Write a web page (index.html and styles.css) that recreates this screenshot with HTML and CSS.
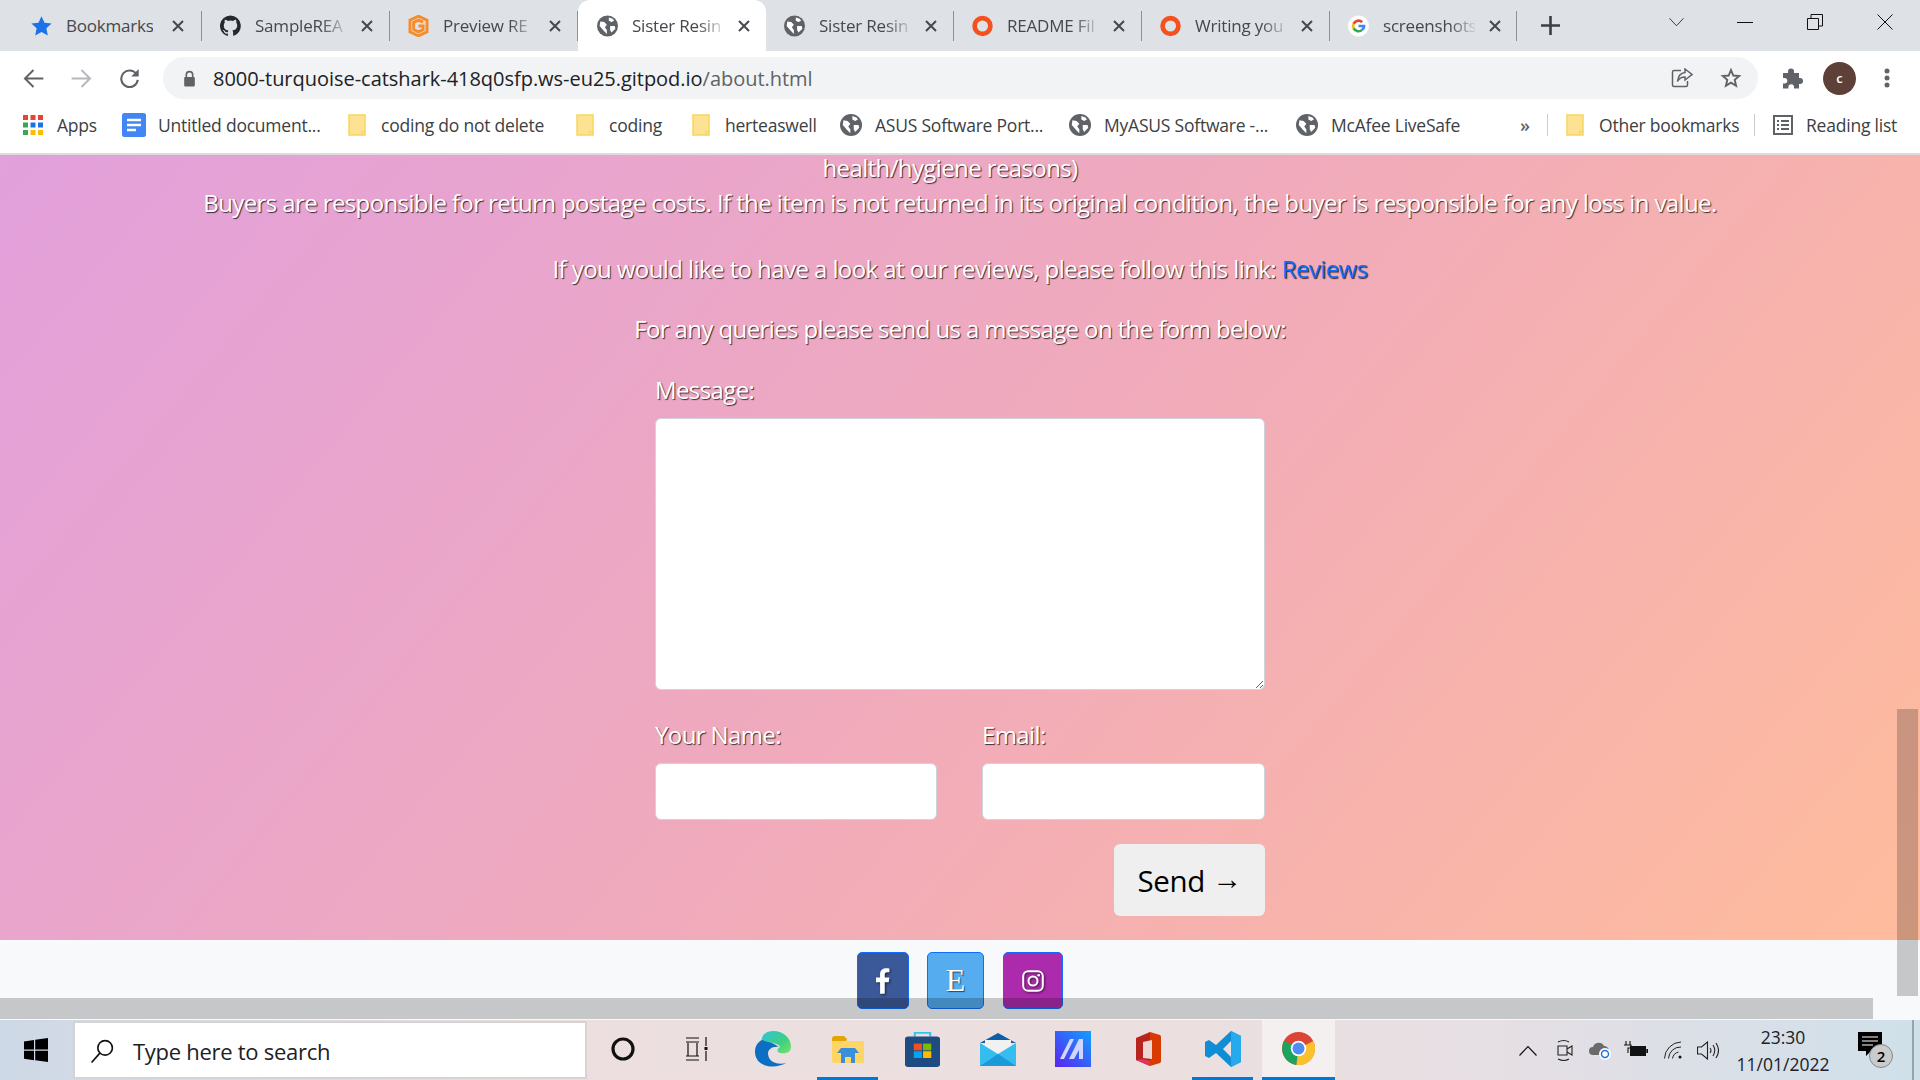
FILE: index.html
```html
<!DOCTYPE html>
<html lang="en">
<head>
<meta charset="utf-8">
<title>Sister Resin</title>
<link rel="stylesheet" href="styles.css">
</head>
<body>
<svg class="defs" width="0" height="0">
  <symbol id="globe" viewBox="0 0 16 16"><circle cx="8" cy="8" r="8" fill="#5f6368"/><path d="M2.500 4.500l3 .5 2 2-1.500 2 1.500 2v3L5 11.500 2 8zM9 1.500l3 1 1 1.500-2 1-2-1zM10 8h3.500l.5 2-3 3-1-2z" fill="#fff"/></symbol>
  <symbol id="folder" viewBox="0 0 18 22"><path d="M1 1h16v20H1z" fill="#fde293" stroke="#f9d65c" stroke-width="1.500"/><path d="M13.500 21v-3.500h3V21" fill="none" stroke="#f9d65c" stroke-width="1.200"/></symbol>
  <symbol id="ring" viewBox="0 0 16 16"><circle cx="8" cy="8" r="6" fill="none" stroke="#f4511e" stroke-width="3.600"/></symbol>
  <symbol id="tabx" viewBox="0 0 12 12"><path d="M1 1l10 10M11 1L1 11" stroke="#45484d" stroke-width="2"/></symbol>
</svg>

<header class="tabbar">
  <div class="tab"><svg class="fav" viewBox="0 0 16 16"><path d="M8 .5l2.300 5 5.400.6-4 3.700 1.100 5.400L8 12.500l-4.800 2.700 1.100-5.400-4-3.700 5.400-.6z" fill="#1a73e8"/></svg><span class="tab-title">Bookmarks</span><svg class="x"><use href="#tabx"/></svg></div>
  <div class="tab"><svg class="fav" viewBox="0 0 16 16"><path d="M8 0a8 8 0 0 0-2.500 15.600c.4.100.5-.2.500-.4v-1.400c-2.200.5-2.700-1-2.700-1-.4-.9-.9-1.200-.9-1.200-.7-.5.100-.5.100-.5.800.1 1.200.8 1.200.8.700 1.200 1.900.9 2.300.7.100-.5.300-.9.500-1.100-1.800-.2-3.600-.9-3.600-4 0-.9.300-1.600.8-2.100-.1-.2-.4-1 .1-2.100 0 0 .7-.2 2.200.8a7.600 7.600 0 0 1 4 0c1.500-1 2.200-.8 2.200-.8.400 1.100.2 1.900.1 2.100.5.600.8 1.300.8 2.100 0 3.100-1.900 3.700-3.700 3.900.3.300.6.800.6 1.500v2.200c0 .2.100.5.600.4A8 8 0 0 0 8 0z" fill="#24292e"/></svg><span class="tab-title">SampleREA</span><svg class="x"><use href="#tabx"/></svg></div>
  <div class="tab"><svg class="fav" viewBox="0 0 16 16"><path d="M8 .5l6.500 3v9L8 15.500l-6.500-3v-9zM11.500 5L8 3.500 4.300 5.200v5.600L8 12.500l3.500-1.700V8H8" fill="none" stroke="#f78c2a" stroke-width="2.200"/></svg><span class="tab-title">Preview RE</span><svg class="x"><use href="#tabx"/></svg></div>
  <div class="tab active"><svg class="fav"><use href="#globe"/></svg><span class="tab-title">Sister Resin</span><svg class="x"><use href="#tabx"/></svg></div>
  <div class="tab"><svg class="fav"><use href="#globe"/></svg><span class="tab-title">Sister Resin</span><svg class="x"><use href="#tabx"/></svg></div>
  <div class="tab"><svg class="fav"><use href="#ring"/></svg><span class="tab-title">README Fil</span><svg class="x"><use href="#tabx"/></svg></div>
  <div class="tab"><svg class="fav"><use href="#ring"/></svg><span class="tab-title">Writing you</span><svg class="x"><use href="#tabx"/></svg></div>
  <div class="tab"><svg class="fav" viewBox="0 0 16 16"><circle cx="8" cy="8" r="8" fill="#fff"/><path d="M8 5a3 3 0 0 1 2 .8l1.500-1.500A5.200 5.200 0 0 0 3.400 5.700L5.100 7A3 3 0 0 1 8 5z" fill="#ea4335"/><path d="M5.100 9L3.400 10.300a5.200 5.200 0 0 0 8 1.400L9.800 10.400A3 3 0 0 1 5.100 9z" fill="#34a853"/><path d="M5 8c0-.4.100-.7.100-1L3.400 5.700a5.200 5.200 0 0 0 0 4.600L5.100 9A3 3 0 0 1 5 8z" fill="#fbbc05"/><path d="M13.200 7H8v2h3a2.600 2.600 0 0 1-1.200 1.400l1.600 1.300A5.200 5.200 0 0 0 13.200 7z" fill="#4285f4"/></svg><span class="tab-title">screenshots</span><svg class="x"><use href="#tabx"/></svg></div>
  <svg class="plus" viewBox="0 0 19 19"><path d="M9.500 0v19M0 9.500h19" stroke="#3c4043" stroke-width="2.600"/></svg>
  <div class="win-controls">
    <svg class="win chev" viewBox="0 0 16 10"><path d="M.5 1l7.500 8 7.500-8" fill="none" stroke="#333" stroke-width="1"/></svg>
    <svg class="win minw" viewBox="0 0 16 16"><path d="M0 8.500h16" stroke="#111" stroke-width="1"/></svg>
    <svg class="win maxw" viewBox="0 0 16 16"><path d="M.5 4.500h11v11H.5zM4 4.500V.5h11.500V12h-4" fill="none" stroke="#111" stroke-width="1"/></svg>
    <svg class="win closew" viewBox="0 0 16 16"><path d="M.5.500l15 15M15.500.500l-15 15" stroke="#111" stroke-width="1"/></svg>
  </div>
</header>

<div class="toolbar">
  <svg class="nav" viewBox="0 0 16 16"><path d="M15.500 8H1.500M8 1.500L1.500 8 8 14.500" fill="none" stroke="#5f6368" stroke-width="1.500"/></svg>
  <svg class="nav" viewBox="0 0 16 16"><path d="M.5 8h14M8 1.500L14.500 8 8 14.500" fill="none" stroke="#b5b8bc" stroke-width="1.500"/></svg>
  <svg class="nav" viewBox="0 0 16 16"><path d="M13.500 5A6.300 6.300 0 1 0 14.300 9" fill="none" stroke="#5f6368" stroke-width="1.600"/><path d="M15 .800v5.700H9.300z" fill="#5f6368"/></svg>
  <div class="omnibox">
    <svg class="lock" viewBox="0 0 12 16"><path d="M3 7V4.500a3 3 0 0 1 6 0V7" fill="none" stroke="#5f6368" stroke-width="1.500"/><rect x="1" y="6.500" width="10" height="9" rx="1" fill="#5f6368"/></svg>
    <span class="url">8000-turquoise-catshark-418q0sfp.ws-eu25.gitpod.io<span class="url-path">/about.html</span></span>
    <svg class="omni-ic" viewBox="0 0 22 20"><path d="M10 2.500H3a1.500 1.500 0 0 0-1.500 1.500v13A1.500 1.500 0 0 0 3 18.500h12a1.500 1.500 0 0 0 1.500-1.500v-4" fill="none" stroke="#5f6368" stroke-width="1.500"/><path d="M14 1l7 5.500-7 5.500V9c-4 0-6 1.500-7.500 4.500C7 8.500 9.500 5 14 4.500z" fill="#f1f3f4" stroke="#5f6368" stroke-width="1.500"/></svg>
    <svg class="omni-ic star" viewBox="0 0 20 20"><path d="M10 2l2.300 5.500 5.900.5-4.500 3.900 1.400 5.800L10 14.600l-5.100 3.100 1.400-5.800L1.800 8l5.900-.5z" fill="none" stroke="#5f6368" stroke-width="1.900"/></svg>
  </div>
  <svg class="ext" viewBox="0 0 22 22"><path d="M2 6h5V4.500a3 3 0 0 1 6 0V6h5v5h1a3 3 0 0 1 0 6h-1v4.500h-5V20a2.800 2.800 0 0 0-5.600 0v1.500H2v-5h1.500a2.800 2.800 0 0 0 0-5.600H2z" fill="#5f6368"/></svg>
  <span class="avatar">c</span>
  <svg class="kebab" viewBox="0 0 6 20"><circle cx="3" cy="3" r="2.500" fill="#5f6368"/><circle cx="3" cy="10" r="2.500" fill="#5f6368"/><circle cx="3" cy="17" r="2.500" fill="#5f6368"/></svg>
</div>

<nav class="bookmarks">
  <div class="bm w-apps"><svg class="apps" viewBox="0 0 20 20"><g fill="#ea4335"><rect width="5" height="5"/><rect x="7.500" width="5" height="5"/><rect x="15" width="5" height="5"/></g><rect y="7.500" width="5" height="5" fill="#34a853"/><rect x="7.500" y="7.500" width="5" height="5" fill="#1a73e8"/><rect x="15" y="7.500" width="5" height="5" fill="#1a73e8"/><rect y="15" width="5" height="5" fill="#34a853"/><rect x="7.500" y="15" width="5" height="5" fill="#fbbc05"/><rect x="15" y="15" width="5" height="5" fill="#fbbc05"/></svg><span>Apps</span></div>
  <div class="bm w-doc"><svg class="doc" viewBox="0 0 24 24"><rect width="24" height="24" rx="2.500" fill="#4285f4"/><path d="M5 7h14M5 12h14M5 17h9" stroke="#fff" stroke-width="2.400"/></svg><span>Untitled document...</span></div>
  <div class="bm w-a"><svg class="folder"><use href="#folder"/></svg><span>coding do not delete</span></div>
  <div class="bm w-b"><svg class="folder"><use href="#folder"/></svg><span>coding</span></div>
  <div class="bm w-c"><svg class="folder"><use href="#folder"/></svg><span>herteaswell</span></div>
  <div class="bm w-d"><svg class="bm-globe"><use href="#globe"/></svg><span>ASUS Software Port...</span></div>
  <div class="bm w-e"><svg class="bm-globe"><use href="#globe"/></svg><span>MyASUS Software -...</span></div>
  <div class="bm w-f"><svg class="bm-globe"><use href="#globe"/></svg><span>McAfee LiveSafe</span></div>
  <span class="more">»</span>
  <i class="sep"></i>
  <div class="bm w-g"><svg class="folder"><use href="#folder"/></svg><span>Other bookmarks</span></div>
  <i class="sep"></i>
  <div class="bm"><svg class="reading" viewBox="0 0 20 20"><rect x="1" y="1" width="18" height="18" fill="none" stroke="#5f6368" stroke-width="2"/><path d="M4 6h2M8 6h8M4 10h2M8 10h8M4 14h2M8 14h8" stroke="#5f6368" stroke-width="1.800"/></svg><span>Reading list</span></div>
</nav>

<div class="viewport">
  <main class="gradient">
    <p class="line l1">health/hygiene reasons)</p>
    <p class="line l2">Buyers are responsible for return postage costs. If the item is not returned in its original condition, the buyer is responsible for any loss in value.</p>
    <p class="line l3">If you would like to have a look at our reviews, please follow this link: <a href="#reviews">Reviews</a></p>
    <p class="line l4">For any queries please send us a message on the form below:</p>
    <form class="form">
      <label class="lbl">Message:</label>
      <textarea class="area"></textarea>
      <div class="two">
        <div class="fld"><label class="lbl">Your Name:</label><input class="inp" type="text"></div>
        <div class="fld"><label class="lbl">Email:</label><input class="inp" type="text"></div>
      </div>
      <div class="send-row"><button class="send" type="button">Send <span class="arrow">→</span></button></div>
    </form>
  </main>
  <footer class="foot">
    <span class="social fb"><svg viewBox="0 0 12 22" class="s-ic"><path d="M7.500 22V12h3.400l.6-4H7.500V5.500c0-1.200.5-2 2-2h2V.2C11 .1 10 0 8.800 0 6 0 3.500 1.700 3.500 5v3H0v4h3.500v10z" fill="#fff"/></svg></span>
    <span class="social et">E</span>
    <span class="social ig"><svg viewBox="0 0 22 22" class="s-ic2"><rect x="1.200" y="1.200" width="19.600" height="19.600" rx="5" fill="none" stroke="#fff" stroke-width="2"/><circle cx="11" cy="11" r="4.500" fill="none" stroke="#fff" stroke-width="2"/><circle cx="16.700" cy="5.300" r="1.300" fill="#fff"/></svg></span>
  </footer>
  <div class="hscroll"></div>
  <div class="vthumb"></div>
</div>

<div class="taskbar">
  <svg class="start" viewBox="0 0 24 24"><path d="M0 3.400l10-1.400v9.500H0zM11.200 1.800L24 0v11.500H11.200zM0 12.700h10v9.500L0 20.800zM11.200 12.700H24V24l-12.800-1.800z" fill="#000"/></svg>
  <div class="search"><svg class="mag" viewBox="0 0 24 24"><circle cx="14.500" cy="9" r="7" fill="none" stroke="#111" stroke-width="1.600"/><path d="M9.500 14L1.500 23" stroke="#111" stroke-width="1.600"/></svg><span>Type here to search</span></div>
  <div class="ts-icons">
    <span class="ts"><svg viewBox="0 0 24 24" class="i24"><circle cx="12" cy="12" r="10" fill="none" stroke="#111" stroke-width="3.200"/></svg></span>
    <span class="ts"><svg viewBox="0 0 24 24" class="i24"><path d="M0 1h13M0 5h13M2 6v13M11 6v13M0 19h13M0 23h13M20 0v9M20 14v10" stroke="#111" stroke-width="1.200" fill="none"/><rect x="18.500" y="10" width="3" height="3" fill="#111"/></svg></span>
    <span class="ts"><svg viewBox="0 0 30 36" class="i36" preserveAspectRatio="none"><defs><linearGradient id="eg" x1="0" y1="0" x2="1" y2="1"><stop offset="0" stop-color="#2fc3e0"/><stop offset=".6" stop-color="#3fd07f"/><stop offset="1" stop-color="#7be26a"/></linearGradient></defs><path d="M15 0c9 0 15 7 15 16 0 6-5 7-9 6-4-1-2-5 0-6-2-5-11-5-14 0C3 8 7 0 15 0z" fill="url(#eg)"/><path d="M6 9C-2 13-2 28 6 33c6 4 14 3 20-1-6 2-14 0-15-8-1-5 3-9 9-8-4-4-10-5-14-7z" fill="#0c6fc4"/></svg></span>
    <span class="ts on"><svg viewBox="0 0 32 27" class="i-folder"><path d="M0 3q0-3 3-3h9l3 3-1 3H0z" fill="#e3a500"/><path d="M0 5h32v20q0 2-2 2H2q-2 0-2-2z" fill="#ffd666"/><path d="M9 12h14l4 5h-4v10h-4v-6h-6v6H9V17H5z" fill="#3a8fd8"/></svg></span>
    <span class="ts"><svg viewBox="0 0 32 40" class="i-store" preserveAspectRatio="none"><path d="M9 6V2h14v4" fill="none" stroke="#35c4ef" stroke-width="2"/><rect y="6" width="32" height="34" rx="3" fill="#1e4b80"/><rect x="8" y="14" width="7.500" height="7.500" fill="#f25022"/><rect x="16.500" y="14" width="7.500" height="7.500" fill="#7fba00"/><rect x="8" y="22.500" width="7.500" height="7.500" fill="#00a4ef"/><rect x="16.500" y="22.500" width="7.500" height="7.500" fill="#ffb900"/></svg></span>
    <span class="ts"><svg viewBox="0 0 36 33" class="i-mail"><path d="M18 0L36 10H0z" fill="#0a5fa8"/><path d="M5 7h26v8L18 21 5 15z" fill="#f1f1f1"/><path d="M0 10l18 11 18-11v23H0z" fill="#35bdf0"/><path d="M0 33l18-12 18 12z" fill="#1591d6" opacity=".8"/></svg></span>
    <span class="ts"><svg viewBox="0 0 36 36" class="i36"><defs><linearGradient id="mg" x1="0" y1="1" x2="1" y2="0"><stop offset="0" stop-color="#5b22f0"/><stop offset="1" stop-color="#12a0ff"/></linearGradient></defs><rect width="36" height="36" fill="url(#mg)"/><path d="M5 28L15 8h4L9 28zM14 28L24 8h4v20h-4v-9l-5 9z" fill="#cfd6ff"/></svg></span>
    <span class="ts"><svg viewBox="0 0 26 34" class="i-office"><path d="M15 0l10 3q1 .5 1 2v24q0 1.500-1 2l-10 3z" fill="#d83b01"/><path d="M15 0L1 6v22l14 6z" fill="#b7241d"/><path d="M1 28l14 6v-5L8 27z" fill="#e0355a"/><path d="M8 10l9-2v19l-9-1z" fill="#eed7d2"/></svg></span>
    <span class="ts on"><svg viewBox="0 0 36 36" class="i36"><path d="M26 0l10 5v26l-10 5-15-14-7 5-4-2v-14l4-2 7 5zM26 10l-8 8 8 8z" fill="#0f8ed6"/><path d="M26 0l10 5v26l-10 5z" fill="#27a9ee"/></svg></span>
    <span class="ts act"><svg viewBox="0 0 32 32" class="i-chrome"><circle cx="16" cy="16" r="16" fill="#db4437"/><path d="M16 16L2 8.500A16 16 0 0 0 14 31.900z" fill="#1ca45c"/><path d="M16 16l14.300-7.200A16 16 0 0 1 14 32z" fill="#fbc02d"/><circle cx="16" cy="16" r="7.500" fill="#fff"/><circle cx="16" cy="16" r="5.800" fill="#4e8df5"/></svg></span>
  </div>
  <div class="tray">
    <svg class="chevup" viewBox="0 0 18 11"><path d="M.5 10.500l8.500-9 8.500 9" fill="none" stroke="#111" stroke-width="1.200"/></svg>
    <svg class="meet" viewBox="0 0 16 23"><path d="M1 7h9v9H1zM10 10l5-3v9l-5-3M1 3q6-3 11 0M1 20q6 3 11 0" fill="none" stroke="#222" stroke-width="1.100"/></svg>
    <svg class="cloud" viewBox="0 0 24 20"><path d="M5 15a4 4 0 0 1 0-8 6 6 0 0 1 11-1 5 5 0 0 1 5 5v4z" fill="#6a6a6a"/><circle cx="17" cy="14" r="6" fill="#fff"/><circle cx="17" cy="14" r="3.500" fill="none" stroke="#1a73e8" stroke-width="1.500"/></svg>
    <svg class="batt" viewBox="0 0 24 16"><path d="M2 0v4M6 0v4M0 4h7v3H4v5" fill="none" stroke="#111" stroke-width="1.100"/><rect x="6" y="5" width="16" height="10" fill="#111"/><rect x="22.300" y="8" width="1.700" height="4" fill="#111"/></svg>
    <svg class="wifi" viewBox="0 0 19 18"><path d="M.5 17.500A17 17 0 0 1 17 1M4.500 17.500A12 12 0 0 1 17 6M8.500 17.500a8 8 0 0 1 6-6.500" fill="none" stroke="#222" stroke-width="1"/><circle cx="16" cy="16" r="1.500" fill="#111"/></svg>
    <svg class="vol" viewBox="0 0 22 19"><path d="M.5 6h4l6-5v17l-6-5h-4zM13 7q2 2.500 0 5M16 4q3.500 5.500 0 11M19 2q5 7.500 0 15" fill="none" stroke="#222" stroke-width="1.100"/></svg>
    <div class="clock"><span>23:30</span><span>11/01/2022</span></div>
    <div class="notif"><svg class="bubble" viewBox="0 0 24 26"><path d="M0 0h24v19H13l-5 5v-5H0z" fill="#000"/><path d="M4 5h16M4 9h16M4 13h11" stroke="#fff" stroke-width="1.200"/></svg><span class="badge">2</span></div>
    <i class="peek"></i>
  </div>
</div>
</body>
</html>
```
FILE: styles.css
```css
* { box-sizing: border-box; }
html, body { margin: 0; height: 100%; overflow: hidden; }
body {
  width: 1920px; height: 1080px; display: flex; flex-direction: column;
  font-family: "Open Sans", "Noto Sans", sans-serif; color: #3c4043; background: #fff;
}
.defs { position: absolute; }

.tabbar { height: 51px; flex: none; background: #dee1e6; display: flex; align-items: center; padding-left: 11px; }
.tab { width: 188px; height: 51px; display: flex; align-items: center; padding-left: 18px; position: relative; flex: none; }
.tab::after { content: ""; position: absolute; right: 0; top: 11px; height: 30px; width: 1px; background: #8e9196; }
.tab:first-child { width: 191px; padding-left: 20px; }
.tab:nth-child(8) { width: 187px; }
.tab.active { background: #fff; border-radius: 12px 12px 0 0; padding-left: 19px; }
.tab.active::after { display: none; }
.fav { width: 21px; height: 22px; flex: none; }
.tab-title {
  width: 92px; margin-left: 14px; overflow: hidden; white-space: nowrap; font-size: 17px; letter-spacing: -.2px; color: #45484d;
  -webkit-mask-image: linear-gradient(90deg, #000 72%, rgba(0,0,0,.1));
  mask-image: linear-gradient(90deg, #000 72%, rgba(0,0,0,.1));
}
.tab:first-child .tab-title { width: 87px; -webkit-mask-image: none; mask-image: none; }
.tab:first-child .x { margin-left: 19px; }
.x { width: 12px; height: 12px; margin-left: 14px; flex: none; }
.plus { width: 19px; height: 19px; margin-left: 24px; flex: none; }
.win-controls { margin-left: auto; display: flex; align-items: flex-start; height: 51px; align-self: flex-start; padding: 14px 27px 0 0; }
.win { flex: none; width: 16px; height: 16px; }
.chev { width: 15px; height: 10px; margin: 3px 53px 0 0; }
.minw { margin-right: 54px; }
.maxw { margin-right: 54px; }

.toolbar { height: 48px; flex: none; display: flex; align-items: center; padding: 6px 0 0 23px; background: #fff; }
.nav { width: 21px; height: 21px; flex: none; margin-right: 27px; }
.nav:nth-child(3) { margin-right: 23px; }
.omnibox { width: 1595px; height: 42px; flex: none; background: #f1f3f4; border-radius: 21px; display: flex; align-items: center; padding-left: 20px; }
.lock { width: 13px; height: 17px; flex: none; }
.url { margin-left: 17px; font-size: 20px; letter-spacing: -.03px; color: #202124; white-space: nowrap; }
.url-path { color: #5f6368; }
.omni-ic { width: 22px; height: 20px; flex: none; margin-left: auto; }
.star { margin-left: 27px; margin-right: 16px; }
.ext { width: 22px; height: 22px; margin-left: 23px; flex: none; }
.avatar { width: 33px; height: 33px; margin-left: 20px; border-radius: 50%; background: #5d4037; color: #fff; font-size: 13px; font-weight: 600; display: flex; align-items: center; justify-content: center; flex: none; }
.kebab { width: 6px; height: 20px; margin-left: 28px; flex: none; }

.bookmarks { height: 56px; flex: none; display: flex; align-items: center; padding: 0 0 2px 23px; background: #fff; border-bottom: 2px solid #dcdcdc; font-size: 17.500px; letter-spacing: -.22px; color: #3c4043; }
.bm { display: flex; align-items: center; white-space: nowrap; flex: none; }
.w-apps { width: 99px; }
.w-doc { width: 226px; }
.w-a { width: 228px; }
.w-b { width: 116px; }
.w-c { width: 148px; }
.w-d { width: 229px; }
.w-e { width: 227px; }
.w-f { width: 224px; }
.w-g { width: 188px; }
.apps { width: 20px; height: 20px; margin-right: 14px; flex: none; }
.doc { width: 24px; height: 24px; margin-right: 12px; flex: none; }
.folder { width: 18px; height: 22px; margin-right: 15px; flex: none; }
.bm-globe { width: 22px; height: 22px; margin-right: 13px; flex: none; }
.more { width: 27px; flex: none; font-size: 18px; font-weight: 600; color: #5f6368; }
.sep { width: 1px; height: 22px; background: #ccc; margin-right: 18px; flex: none; }
.reading { width: 20px; height: 20px; margin-right: 13px; flex: none; }

.viewport { height: 865px; flex: none; position: relative; background: #f8f9fa; }
.gradient {
  height: 785px; text-align: center;
  background: linear-gradient(130deg, #e2a0dc 0%, #f0aabc 50%, #ffbc9c 100%);
  color: #fff; font-size: 24px; letter-spacing: -.61px; text-shadow: 1px 1px 1px rgba(0,0,0,.75);
}
.line { margin: 0; height: 36px; line-height: 36px; }
.l1 { width: 1900px; height: 30px; line-height: 26px; }
.l3 { margin-top: 30px; letter-spacing: -.58px; }
.l4 { margin-top: 24px; }
.l3 a { color: #0d6efd; text-decoration: none; }
.form { width: 610px; margin: 25px 0 0 655px; display: flex; flex-direction: column; text-align: left; }
.lbl { display: block; height: 36px; line-height: 36px; }
.area { display: block; width: 610px; height: 272px; margin-top: 10px; background: #fff; border: 1px solid #ced4da; border-radius: 6px; }
.two { display: flex; gap: 45px; margin-top: 27px; }
.fld { width: 282px; }
.fld:last-child { width: 283px; }
.inp { display: block; width: 100%; height: 57px; margin-top: 10px; background: #fff; border: 1px solid #ced4da; border-radius: 6px; }
.send-row { display: flex; justify-content: flex-end; margin-top: 24px; }
.send { width: 151px; height: 72px; border: 0; border-radius: 6px; background: #efefef; color: #000; font: 400 29.500px "Open Sans", sans-serif; letter-spacing: -.3px; padding: 0; text-shadow: none; }
.arrow { font-family: "Liberation Sans", sans-serif; vertical-align: 3px; }

.foot { height: 80px; display: flex; gap: 18px; padding: 12px 0 0 857px; }
.social { height: 57px; flex: none; border: 1px solid #0d6efd; border-radius: 5px; display: flex; align-items: center; justify-content: center; }
.fb { width: 52px; background: #3b5998; }
.et { width: 57px; background: #55acee; color: #fff; font: 400 32px "Liberation Serif", serif; text-shadow: 1px 1px 1px rgba(0,0,0,.6); }
.ig { width: 60px; margin-left: 1px; background: #ac2bac; }
.s-ic { width: 14px; height: 26px; filter: drop-shadow(1px 1px 1px rgba(0,0,0,.6)); }
.s-ic2 { width: 22px; height: 22px; filter: drop-shadow(1px 1px 1px rgba(0,0,0,.6)); }
.hscroll { position: absolute; left: 0; bottom: 1px; width: 1873px; height: 21px; background: rgba(0,0,0,.2); }
.vthumb { position: absolute; left: 1897px; top: 554px; width: 21px; height: 287px; background: rgba(0,0,0,.2); }

.taskbar { height: 60px; flex: none; display: flex; align-items: center; background: linear-gradient(90deg, #cdd9e6 0%, #eddfdf 30%, #ecdfdf 60%, #e6dfe4 78%, #cfe0ea 100%); }
.start { width: 24px; height: 24px; margin-left: 24px; flex: none; }
.search { width: 514px; height: 58px; margin-left: 25px; padding-top: 1px; background: #fff; border: 2px solid #d6d3d3; display: flex; align-items: center; font-size: 22px; letter-spacing: -.28px; color: #202124; flex: none; }
.mag { width: 25px; height: 26px; margin-left: 15px; margin-right: 18px; flex: none; }
.ts-icons { display: flex; align-items: center; height: 60px; margin-left: -2px; }
.ts { width: 75px; height: 60px; display: flex; align-items: center; justify-content: center; flex: none; position: relative; padding-bottom: 2px; }
.ts.on::after { content: ""; position: absolute; left: 7px; right: 7px; bottom: 0; height: 3px; background: #0078d4; }
.ts.act { width: 73px; margin-left: 2px; background: #f4f0ef; border-bottom: 3px solid #0078d4; padding-bottom: 0; }
.i24 { width: 24px; height: 24px; }
.i36 { width: 36px; height: 36px; }
.i-folder { width: 32px; height: 27px; }
.i-store { width: 35px; height: 36px; }
.i-mail { width: 36px; height: 33px; }
.i-office { width: 26px; height: 34px; }
.i-chrome { width: 33px; height: 33px; }
.tray { margin-left: auto; display: flex; align-items: center; height: 60px; }
.tray > svg { flex: none; }
.chevup { width: 18px; height: 11px; margin-right: 20px; }
.meet { width: 16px; height: 23px; margin-right: 15px; }
.cloud { width: 24px; height: 20px; margin-right: 12px; }
.batt { width: 24px; height: 16px; margin-right: 16px; margin-top: -3px; }
.wifi { width: 19px; height: 18px; margin-right: 14px; }
.vol { width: 22px; height: 19px; margin-right: 8px; }
.clock { width: 112px; display: flex; flex-direction: column; align-items: center; gap: 3px; font-size: 17.500px; line-height: 24px; color: #202124; }
.notif { position: relative; width: 35px; height: 36px; margin-left: 19px; }
.bubble { position: absolute; left: 0; top: 0; width: 24px; height: 26px; }
.badge { position: absolute; left: 11px; top: 12px; width: 24px; height: 24px; border-radius: 50%; background: #c9cbcc; border: 1px solid #888; color: #000; font-size: 15px; font-weight: 600; display: flex; align-items: center; justify-content: center; }
.peek { width: 2px; height: 60px; background: #9aa3aa; margin-left: 19px; margin-right: 6px; flex: none; }
```
